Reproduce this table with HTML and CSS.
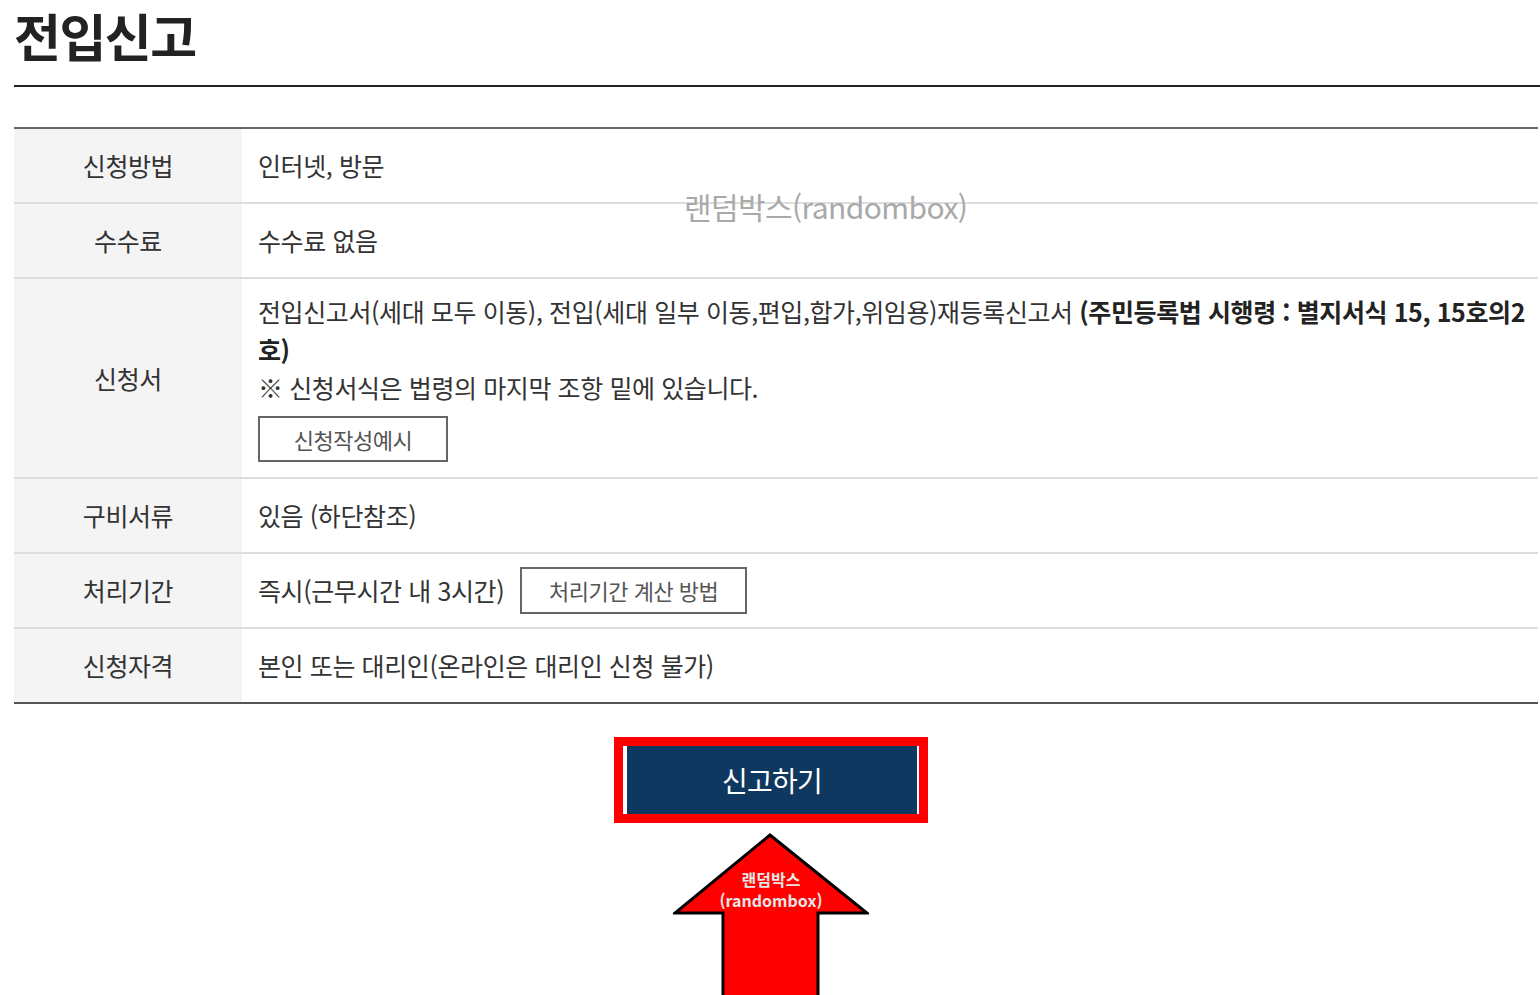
FILE: index.html
```html
<!DOCTYPE html>
<html lang="ko">
<head>
<meta charset="utf-8">
<title>전입신고</title>
<link rel="stylesheet" href="styles.css">
</head>
<body>
<div class="page">
  <h1 class="title">전입신고</h1>

  <table class="info">
    <tbody>
      <tr>
        <th>신청방법</th>
        <td>인터넷, 방문</td>
      </tr>
      <tr>
        <th>수수료</th>
        <td>수수료 없음</td>
      </tr>
      <tr class="tall">
        <th>신청서</th>
        <td>
          <p class="lines">전입신고서(세대 모두 이동), 전입(세대 일부 이동,편입,합가,위임용)재등록신고서 <strong>(주민등록법 시행령 : 별지서식 15, 15호의2호)</strong></p>
          <p class="lines">※ 신청서식은 법령의 마지막 조항 밑에 있습니다.</p>
          <a class="line-btn btn-example">신청작성예시</a>
        </td>
      </tr>
      <tr>
        <th>구비서류</th>
        <td>있음 (하단참조)</td>
      </tr>
      <tr>
        <th>처리기간</th>
        <td><div class="inline-row"><span>즉시(근무시간 내 3시간)</span><a class="line-btn btn-calc">처리기간 계산 방법</a></div></td>
      </tr>
      <tr class="last">
        <th>신청자격</th>
        <td>본인 또는 대리인(온라인은 대리인 신청 불가)</td>
      </tr>
    </tbody>
  </table>

  <div class="watermark">랜덤박스(randombox)</div>

  <div class="actions">
    <div class="highlight">
      <a class="btn-report">신고하기</a>
    </div>
  </div>

  <div class="arrow-wrap">
    <div class="arrow">
      <svg width="196" height="170" viewBox="0 0 196 170" aria-hidden="true">
        <polygon points="97,2 2,80 50,80 50,175 145,175 145,80 194,80" fill="#ff0000" stroke="#000" stroke-width="3" stroke-linejoin="miter"/>
      </svg>
      <div class="arrow-label">랜덤박스<br>(randombox)</div>
    </div>
  </div>
</div>
</body>
</html>
```

FILE: styles.css
```css
html, body {
  margin: 0;
  padding: 0;
  background: #fff;
  height: 995px;
  overflow: hidden;
}

body {
  font-family: "Noto Sans CJK KR", "Noto Sans", sans-serif;
  color: #333;
}

.page {
  position: relative;
  padding-left: 14px;
}

.title {
  margin: 0;
  padding-top: 0;
  height: 85px;
  font-size: 51px;
  line-height: 70px;
  font-weight: 700;
  letter-spacing: -1.5px;
  color: #222;
  border-bottom: 2px solid #222;
}

.info {
  margin-top: 40px;
  width: 1524px;
  border-collapse: collapse;
  border-top: 2px solid #666;
  font-size: 25px;
  letter-spacing: -0.4px;
}

.info th,
.info td {
  height: 73px;
  padding: 0;
  vertical-align: middle;
  border-bottom: 2px solid #ddd;
  line-height: 37px;
}

.info th {
  width: 228px;
  background: #f4f4f4;
  font-weight: 400;
  text-align: center;
  color: #333;
}

.info td {
  padding-left: 16px;
  text-align: left;
  color: #333;
}

.info tr.last th,
.info tr.last td {
  border-bottom-color: #555;
}

.info tr.tall td {
  padding-top: 13px;
  padding-bottom: 15px;
}

.lines {
  margin: 0;
  line-height: 38px;
}

.lines strong {
  font-weight: 700;
  color: #222;
}

.line-btn {
  display: inline-flex;
  align-items: center;
  justify-content: center;
  box-sizing: border-box;
  border: 2px solid #666;
  color: #555;
  font-size: 22px;
  letter-spacing: -0.5px;
  background: #fff;
}

.btn-example {
  margin-top: 10px;
  width: 190px;
  height: 46px;
}

.btn-calc {
  width: 227px;
  height: 47px;
}

.inline-row {
  display: flex;
  align-items: center;
  gap: 16px;
}

.watermark {
  position: absolute;
  left: 684px;
  top: 186px;
  font-size: 30px;
  line-height: 40px;
  letter-spacing: -0.6px;
  color: #a9a9a9;
}

.actions {
  display: flex;
  justify-content: center;
  padding-top: 33px;
  padding-right: 22px;
  width: 1514px;
}

.highlight {
  display: flex;
  border: 9px solid #ff0000;
  padding: 0 2px 0 4px;
  background: #fff;
}

.btn-report {
  display: flex;
  align-items: center;
  justify-content: center;
  width: 290px;
  height: 68px;
  background: #0f3861;
  color: #fff;
  font-size: 28px;
  letter-spacing: -0.8px;
}

.arrow-wrap {
  display: flex;
  justify-content: center;
  width: 1514px;
  padding-right: 24px;
  margin-top: 10px;
}

.arrow {
  position: relative;
  width: 196px;
  height: 170px;
}

.arrow svg {
  display: block;
}

.arrow-label {
  position: absolute;
  left: 0;
  right: 0;
  top: 36px;
  text-align: center;
  font-size: 16px;
  line-height: 21px;
  font-weight: 700;
  color: #e6e6e6;
}
```
